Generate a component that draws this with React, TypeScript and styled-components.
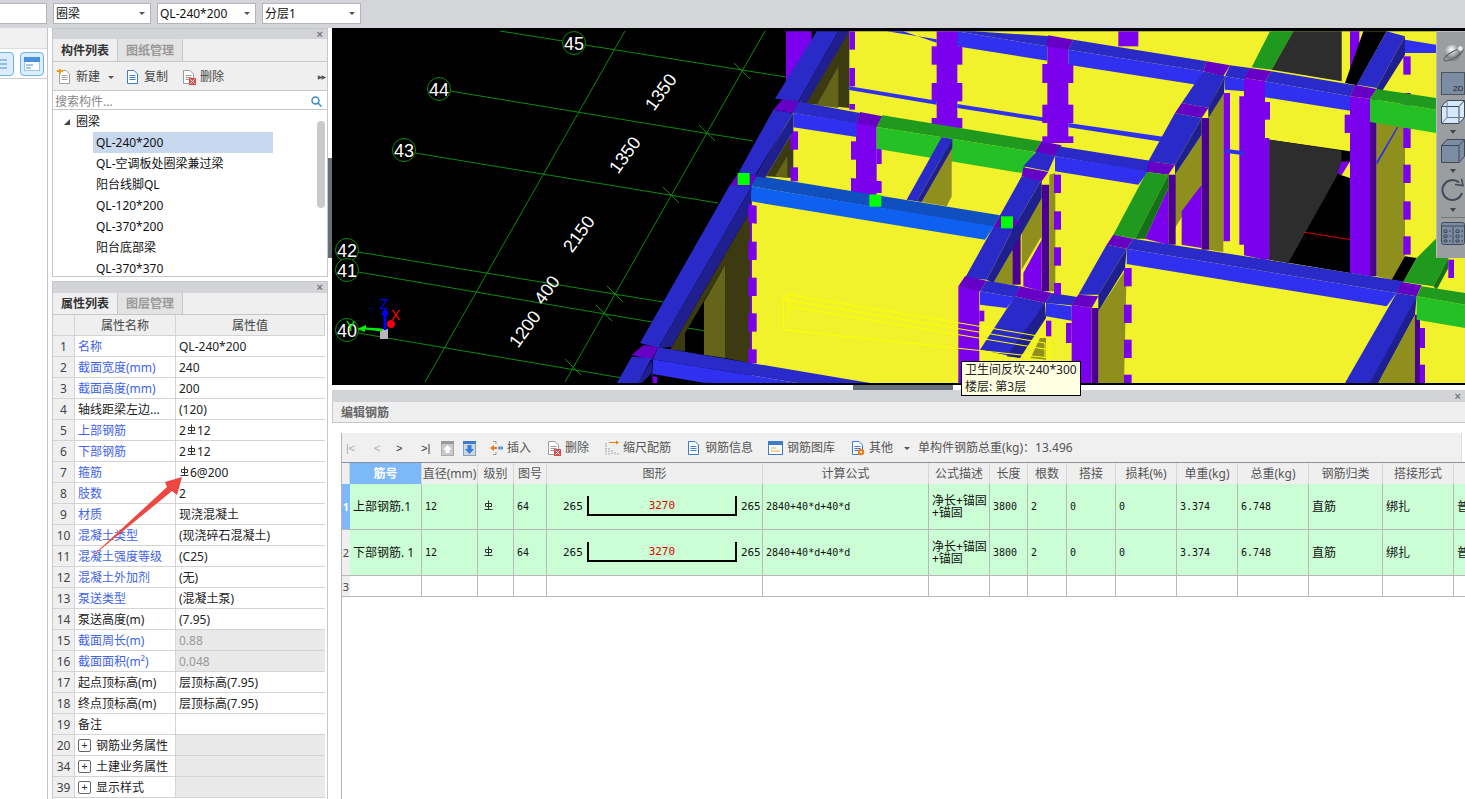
import React from 'react';
import styled, { createGlobalStyle } from 'styled-components';

const Global = createGlobalStyle`
  html, body { margin: 0; padding: 0; background: #fff; overflow: hidden; }
  body { font-family: "Noto Sans", "Noto Sans CJK SC", sans-serif; font-size: 12px; color: #111; }
  * { box-sizing: border-box; }
`;

const Page = styled.div`position: relative; width: 1465px; height: 799px; overflow: hidden; display: flex; flex-direction: column;`;
const TopBar = styled.div`height: 28px; background: #d4d5d8; display: flex; gap: 6px; padding: 3px 0 0 0; margin-left: -45px; flex: none;`;
const SelectBox = styled.div<{ $w: number }>`
  width: ${p => p.$w}px; height: 21px; background: #fff; border: 1px solid #b4b5b8; padding-left: 2px;
  display: flex; align-items: center; justify-content: space-between; padding-right: 5px; line-height: 1;
  &::after { content: ''; border: 3px solid transparent; border-top: 3px solid #555; border-bottom: 0; border-left-width: 3px; }
`;
const Body = styled.div`flex: 1; display: flex; min-height: 0;`;
const LeftStrip = styled.div`width: 48px; flex: none; border-right: 1px solid #c4c4c6; margin-right: 4px; display: flex; flex-direction: column;`;
const StripBand = styled.div`height: 21px; background: #f0f0f0; border-bottom: 1px solid #ddd;`;
const StripTools = styled.div`height: 30px; border-bottom: 1px solid #cfcfcf; display: flex; gap: 6px; padding-top: 3px; margin-left: -10px;`;
const StripButton = styled.div`width: 24px; height: 24px; border: 1px solid #6db0f4; border-radius: 4px; background: #dcedff; display: flex; align-items: center; justify-content: center;`;
const PanelColumn = styled.div`width: 276px; flex: none; display: flex; flex-direction: column; gap: 4px;`;
const Panel = styled.div<{ $grow?: boolean; $h?: number }>`
  border: 1px solid #c6c7ca; border-bottom-width: ${p => (p.$grow ? 0 : 1)}px; background: #fff; position: relative;
  ${p => (p.$h ? `height: ${p.$h}px; flex: none;` : '')} ${p => (p.$grow ? 'flex: 1; min-height: 0;' : '')}
  display: flex; flex-direction: column; overflow: hidden;
`;
const DockHead = styled.div<{ $h: number }>`
  height: ${p => p.$h}px; flex: none; background: #d3d4d8; display: flex; align-items: center; justify-content: flex-end;
  padding-right: 4px; color: #777; font-size: 11px; font-weight: 700; line-height: 1; font-family: "Liberation Sans", sans-serif;
`;
const Tabs = styled.div<{ $h: number }>`height: ${p => p.$h}px; flex: none; display: flex; background: #efefef; border-bottom: 1px solid #c6c7ca;`;
const Tab = styled.div<{ $on?: boolean }>`
  width: 65px; display: flex; align-items: center; justify-content: center; font-weight: 700; line-height: 1; padding-top: 1px;
  color: ${p => (p.$on ? '#333' : '#999')}; background: ${p => (p.$on ? '#efefef' : '#e3e3e3')};
  border-right: 1px solid #c6c7ca;
`;
const PanelTools = styled.div`height: 29px; flex: none; background: #efefef; border-bottom: 1px solid #c6c7ca; display: flex; align-items: center; padding: 2px 0 0 4px; color: #444; position: relative;`;
const ToolBtn = styled.div<{ $ml?: number }>`display: flex; align-items: center; gap: 4px; margin-left: ${p => p.$ml ?? 0}px; line-height: 1; white-space: nowrap;`;
const Caret = styled.span<{ $ml?: number }>`display: inline-block; margin-left: ${p => p.$ml ?? 0}px; border: 3px solid transparent; border-top: 3px solid #555; border-bottom: 0;`;
const More = styled.div`position: absolute; right: 2px; top: 12px; font-size: 6px; color: #555; line-height: 1; letter-spacing: -1px; font-family: "DejaVu Sans", sans-serif;`;
const Search = styled.div`height: 19px; flex: none; border-bottom: 1px solid #c6c7ca; display: flex; align-items: center; justify-content: space-between; padding: 3px 5px 0 2px; color: #888; line-height: 1;`;
const Tree = styled.div`flex: 1; position: relative; overflow: hidden; padding-top: 1px;`;
const TreeRoot = styled.div`height: 21px; display: flex; align-items: center; padding-left: 11px; gap: 6px; line-height: 1; padding-top: 1px;`;
const TreeItem = styled.div<{ $on?: boolean }>`height: 21px; margin-left: 40px; width: 180px; padding: 1px 0 0 3px; display: flex; align-items: center; line-height: 1; background: ${p => (p.$on ? '#c8d9ef' : 'transparent')};`;
const Scrollbar = styled.div`position: absolute; left: 264px; top: 11px; width: 8px; height: 87px; border-radius: 4px; background: #cacaca;`;
const PropGrid = styled.div`display: grid; grid-template-columns: 22px 101px 149px; grid-auto-rows: 21px; width: 272px; border-right: 1px solid #d0d0d0;`;
const PropHead = styled.div`background: #efefef; color: #444; display: flex; align-items: center; justify-content: center; line-height: 1; padding-top: 1px; border-right: 1px solid #d4d4d4; border-bottom: 1px solid #d4d4d4;`;
const PropNum = styled.div`background: #efefef; color: #444; font-size: 12px; display: flex; align-items: center; justify-content: center; line-height: 1; padding-top: 1px; border-right: 1px solid #d4d4d4; border-bottom: 1px solid #d4d4d4;`;
const PropName = styled.div<{ $link?: boolean }>`
  padding: 1px 0 0 3px; display: flex; align-items: center; gap: 5px; line-height: 1; white-space: nowrap; overflow: hidden;
  color: ${p => (p.$link ? '#3f63e6' : '#222')}; border-right: 1px solid #d4d4d4; border-bottom: 1px solid #d4d4d4;
`;
const PropValue = styled.div<{ $shade?: boolean; $dim?: boolean }>`
  padding: 1px 0 0 3px; display: flex; align-items: center; line-height: 1; white-space: nowrap;
  color: ${p => (p.$dim ? '#999' : '#222')}; background: ${p => (p.$shade ? '#e9e9e9' : '#fff')}; border-bottom: 1px solid #d4d4d4;
`;
const Plus = styled.span`width: 13px; height: 13px; border: 1px solid #666; border-radius: 2px; display: inline-flex; align-items: center; justify-content: center; font-size: 11px; line-height: 1; color: #333; font-family: "Liberation Sans", sans-serif;`;
const Splitter = styled.div`width: 4px; flex: none; padding-top: 130px;`;
const SplitHandle = styled.div`width: 4px; height: 100px; background: #667079;`;
const RightColumn = styled.div`flex: 1; min-width: 0; display: flex; flex-direction: column; position: relative;`;
const Viewport = styled.div`height: 357px; flex: none; background: #000; position: relative; overflow: hidden; border-bottom: 2px solid #000;`;
const Scene = styled.svg`display: block; width: 1133px; height: 357px;`;
const ViewTools = styled.div`
  position: absolute; right: 0; top: 3px; width: 29px; height: 227px; background: #9b9ea1; border-left: 1px solid #b9bbbd; border-top: 1px solid #b9bbbd;
  display: flex; flex-direction: column; align-items: center; padding-left: 3px; padding-top: 10px;
`;
const ViewCaret = styled.span`border: 3px solid transparent; border-top: 4px solid #444; border-bottom: 0; margin: 6px 0 5px;`;
const ViewRule = styled.div`width: 24px; height: 1px; background: #777; margin: 0 0 4px;`;
const HSplit = styled.div`height: 5px; flex: none; display: flex; justify-content: center; padding-left: 8px;`;
const HHandle = styled.div`width: 100px; height: 5px; background: #667079;`;
const EditPanel = styled.div`flex: 1; min-height: 0; display: flex; flex-direction: column;`;
const EditTitle = styled.div`height: 21px; flex: none; background: #efefef; border-bottom: 1px solid #c6c7ca; border-left: 1px solid #c6c7ca; color: #666; font-weight: 700; display: flex; align-items: center; padding: 1px 0 0 8px; line-height: 1;`;
const EditBody = styled.div`flex: 1; min-height: 0; padding: 10px 0 0 9px; display: flex; flex-direction: column;`;
const EditInner = styled.div`flex: 1; min-height: 0; border-left: 1px solid #b5b5b5; margin-top: 0; display: flex; flex-direction: column;`;
const EditTools = styled.div`height: 29px; flex: none; background: #f0f0f0; margin-right: 3px; border-right: 1px solid #ddd; display: flex; align-items: center; color: #555; padding-left: 4px; padding-top: 1px; line-height: 1; white-space: nowrap;`;
const Nav = styled.span<{ $w: number; $dim?: boolean }>`width: ${p => p.$w}px; flex: none; color: ${p => (p.$dim ? '#aaa' : '#333')}; font-family: "Liberation Sans", sans-serif; font-size: 11px;`;
const SteelGrid = styled.div`
  display: grid; overflow: hidden; flex: none; border-top: 1px solid #8a8f99;
  grid-template-columns: 8px 72px 56px 36px 33px 216px 166px 61px 38px 39px 49px 61px 61px 71px 74px 71px 90px;
  grid-template-rows: 21px 46px 46px 21px;
`;
const GridHead = styled.div<{ $on?: boolean }>`
  background: ${p => (p.$on ? '#7db8f8' : '#efefef')}; color: ${p => (p.$on ? '#fff' : '#555')}; font-weight: ${p => (p.$on ? 700 : 400)};
  border-right: 1px solid #d6d6d6; display: flex; align-items: center; justify-content: center; line-height: 1; white-space: nowrap;
`;
const GridNum = styled.div<{ $on?: boolean }>`
  background: ${p => (p.$on ? '#7db8f8' : '#efefef')}; color: ${p => (p.$on ? '#fff' : '#444')}; font-weight: ${p => (p.$on ? 700 : 400)}; font-size: 11px;
  border-bottom: 1px solid #b8b8b8; display: flex; align-items: center; justify-content: center; line-height: 1; overflow: hidden;
`;
const Cell = styled.div<{ $mono?: boolean; $empty?: boolean }>`
  background: ${p => (p.$empty ? '#fff' : '#cbfed5')}; border-right: 1px solid #b8b8b8; border-bottom: 1px solid #b8b8b8;
  display: flex; align-items: center; padding-left: 3px; overflow: hidden; white-space: nowrap; line-height: 1; color: #111;
  ${p => (p.$mono ? 'font-family: "DejaVu Sans Mono", monospace; font-size: 10px;' : '')}
`;
const GradeCell = styled(Cell)`padding-left: 5px;`;
const WrapText = styled.span`white-space: normal; line-height: 12px; display: block; width: 60px; word-break: break-all;`;
const ShapeCell = styled(Cell)`padding: 0 1px 0 16px; font-family: "DejaVu Sans Mono", monospace; font-size: 11px; gap: 4px;`;
const Bracket = styled.div`width: 150px; height: 20px; border: 2px solid #000; border-top: 0; margin-top: -1px; display: flex; justify-content: center; color: #e00000; padding-top: 4px;`;
const Tip = styled.div`position: absolute; left: 629px; top: 333px; width: 120px; height: 35px; background: #ffffe1; border: 1px solid #000; padding: 0 3px; line-height: 16.5px; color: #222; z-index: 3; white-space: nowrap;`;
const ArrowMark = styled.svg`position: absolute; left: 85px; top: 470px; width: 105px; height: 95px; z-index: 4;`;
const Mark = styled.svg`width: 9px; height: 11px; flex: none; margin: -3px 1px 0;`;

const RebarMark = () => (
  <Mark viewBox="0 0 9 11" fill="none" stroke="#333" strokeWidth="1">
    <path d="M1.5 6V3.5H7.5V6.5H1.5M4.5 0.5V9.5M0.5 9.5H8.5" />
  </Mark>
);

const Page16 = ({ c = '#8a9099', children }: { c?: string; children?: React.ReactNode }) => (
  <svg width="15" height="16" viewBox="0 0 15 16" fill="none">
    <path d="M2.5 1.5H9L12.5 5V14.5H2.5Z" fill="#fff" stroke={c} />
    <path d="M4.5 6.5H10.5M4.5 8.5H10.5M4.5 10.5H10.5" stroke={c} />
    {children}
  </svg>
);
const NewIcon = () => <Page16 c="#a0a0a0"><path d="M0 2H6M3 0V5" stroke="#f39a12" strokeWidth="2" /></Page16>;
const CopyIcon = () => <Page16 c="#3d7cc6" />;
const DelIcon = () => <Page16 c="#9a9a9a"><rect x="8" y="9" width="7" height="7" fill="#d94c4c" /><path d="M9.5 10.5L13.5 14.5M13.5 10.5L9.5 14.5" stroke="#fff" /></Page16>;
const GearIcon = () => <Page16 c="#3d7cc6"><circle cx="11" cy="12" r="3.2" fill="#ee7a15" /><circle cx="11" cy="12" r="1.1" fill="#fff" /></Page16>;
const InsertIcon = () => (
  <svg width="14" height="16" viewBox="0 0 14 16" fill="none">
    <path d="M4 1.5H7V4M4 14.5H7V12" stroke="#999" />
    <path d="M1 8L5 5V11Z" fill="#ee7a15" /><rect x="5" y="7" width="3" height="2" fill="#ee7a15" />
    <rect x="9" y="6.5" width="5" height="3" fill="#5aa0e8" />
  </svg>
);
const ScaleIcon = () => (
  <svg width="14" height="16" viewBox="0 0 14 16" fill="none">
    <path d="M1 3V15M4 8V15M7 10V15M10 12V15M13 13V15" stroke="#8a8f99" strokeDasharray="1.5 1" />
    <path d="M4 2.5H12" stroke="#ee7a15" /><path d="M14 2.5L11 0.5V4.5Z" fill="#ee7a15" />
  </svg>
);
const LibIcon = () => (
  <svg width="15" height="14" viewBox="0 0 15 14" fill="none">
    <rect x="0.5" y="0.5" width="14" height="13" fill="#fff" stroke="#3d7cc6" />
    <rect x="1" y="1" width="13" height="3" fill="#3d7cc6" />
    <path d="M3 7H8M3 10H12" stroke="#e0b040" />
  </svg>
);
const BoxArrow = ({ up }: { up?: boolean }) => (
  <svg width="13" height="15" viewBox="0 0 13 15">
    <rect x="0.5" y="0.5" width="12" height="14" fill={up ? '#c8c8c8' : '#cfd6e0'} stroke={up ? '#aaa' : '#8aa0c0'} />
    <rect x="0" y="0" width="13" height="3" fill={up ? '#999' : '#3d7cc6'} />
    <path d={up ? 'M6.5 4L11 8.5H8.5V12H4.5V8.5H2Z' : 'M6.5 13L11 8H8.5V4H4.5V8H2Z'} fill={up ? '#fff' : '#2f80e0'} />
  </svg>
);
const MagnifierIcon = () => (
  <svg width="11" height="11" viewBox="0 0 11 11" fill="none" stroke="#3a8cc8" strokeWidth="1.5">
    <circle cx="4.5" cy="4.5" r="3.5" /><path d="M7 7L10.5 10.5" />
  </svg>
);
const FoldMark = () => <svg width="6" height="6" viewBox="0 0 6 6"><path d="M6 0V6H0Z" fill="#444" /></svg>;

const Sphere = () => (
  <svg width="22" height="21" viewBox="0 0 24 21" style={{ marginBottom: 9 }}>
    <defs><radialGradient id="sg" cx="40%" cy="30%"><stop offset="0" stopColor="#fff" /><stop offset="1" stopColor="#80858c" /></radialGradient></defs>
    <circle cx="12" cy="11" r="9" fill="url(#sg)" />
    <ellipse cx="11.500" cy="13" rx="12" ry="3.500" transform="rotate(-30 12 11)" fill="none" stroke="#555" />
    <circle cx="20" cy="6" r="3" fill="#e8e8e8" stroke="#777" strokeWidth=".5" />
  </svg>
);
const Box2D = () => (
  <svg width="24" height="23" viewBox="0 0 24 23" style={{ marginBottom: 5 }}>
    <rect x="0.5" y="0.5" width="23" height="22" fill="#7c8ca3" stroke="#4a5560" />
    <text x="12" y="19" fontSize="8" fill="#222" fontFamily="Liberation Sans">2D</text>
  </svg>
);
const Cube = ({ wire }: { wire?: boolean }) => (
  <svg width="24" height="24" viewBox="0 0 24 24" fill="none" stroke="#3e4a58">
    <path d="M0.5 6.5L6 0.5H23.5V17.5L18 23.5H0.5Z" fill={wire ? '#d6e8fc' : '#7c8ca3'} />
    <path d="M0.5 6.5H18V23.5M18 6.5L23.5 0.5" />
    {wire && <path d="M6 0.5V17.5H23.5M6 17.5L0.5 23.5" stroke="#6a7a8c" />}
  </svg>
);
const Rotate = () => (
  <svg width="24" height="24" viewBox="0 0 24 24" fill="none" stroke="#3e4a58" strokeWidth="2">
    <path d="M21 15A10 10 0 1 1 18 4.5" /><path d="M14 6.5L22 7.5L20.5 1" strokeWidth="1.5" />
  </svg>
);
const Checklist = () => (
  <svg width="24" height="23" viewBox="0 0 24 23" fill="none" stroke="#3e4a58">
    <rect x="0.5" y="0.5" width="23" height="22" rx="2" fill="#7c8ca3" />
    <path d="M1 4H23M12 5V21M3 8H6V10.5H3ZM3 13H6V15.5H3ZM3 18H6V20H3ZM15 8H18V10.5H15ZM15 13H18V15.5H15ZM15 18H18V20H15ZM8 9H10M8 14H10M8 19H10M20 9H22M20 14H22M20 19H22" />
  </svg>
);

const Y = '#f2f22c', P = '#7a00ee', PT = '#6500c4', PD = '#4a0090', B = '#3030f0', BT = '#2a2ac8', BD = '#1f1f90';
const O = '#8f8f1e', OM = '#65651a', OD = '#3c3a10', G = '#25c025', GT = '#1f9a1f', GD = '#15701a', SB = '#0f5ff0', ST = '#0f4fc0';

type Face = [string, string];
const nearFaces: Face[] = [
  [Y, '628,10 2475,10 2475,1065 335,1065 335,470 460,250'],
  [OD, '480,225 620,10 628,10 628,240'],
  [OM, '530,232 595,115 595,240'],
  [P, '438,10 515,10 515,50 438,175'],
  [BT, '1000,10 1235,25 1222,55 950,10'],
  [B, '950,10 1222,55 1222,98 950,55'],
  [B, '740,10 890,34 890,44 790,10'],
  [P, '890,10 952,10 952,295 890,295'],
  [P, '875,55 967,55 967,110 875,110'], [P, '875,165 967,165 967,220 875,220'], [P, '875,270 967,270 967,300 875,300'],
  [B, '628,175 890,218 890,230 628,186'],
  [B, '952,228 1222,270 1222,282 952,240'],
  [P, '628,10 645,10 645,65 628,65'], [P, '628,120 645,120 645,175 628,175'], [P, '628,228 645,228 645,245 628,245'],
  [OD, '378,445 460,310 460,450'],
  [OM, '405,445 442,385 442,450'],
  [P, '452,310 474,310 474,365 452,365'], [P, '452,418 474,418 474,460 452,460'],
  [P, '648,285 710,285 710,500 648,500'],
  [P, '633,340 648,340 648,395 633,395'], [P, '710,362 725,362 725,408 710,408'], [P, '633,450 725,460 725,495 633,495'],
  [BT, '470,220 660,255 650,287 460,255'],
  [B, '460,255 650,285 650,327 460,298'],
  [PT, '660,252 727,265 710,297 650,285'],
  [GT, '727,262 1205,340 1185,372 710,297'],
  [G, '710,297 1185,372 1145,435 710,362'],
  [O, '935,360 935,505 920,535 845,522'],
  [BT, '905,328 937,333 830,520 800,515'],
  [BD, '937,333 937,360 845,522 830,520'],
  [PT, '1185,372 1205,340 1265,352 1245,385'],
  [BT, '1150,415 1190,370 1245,385 1225,430'],
  [PD, '1205,470 1228,470 1228,790 1205,790'],
  [O, '1228,440 1246,435 1246,790 1228,790'],
  [O, '1145,580 1205,510 1205,625 1145,725'],
  [P, '1150,735 1205,635 1205,790 1150,775'],
  [PD, '1115,580 1142,580 1142,770 1115,770'],
  [O, '1060,765 1118,665 1118,770'],
  [ST, '345,442 1080,562 1060,597 332,475'],
  [SB, '332,475 1062,595 1035,635 332,520'],
  [OD, '90,965 330,550 330,1005 255,990 255,711 135,916 135,970'],
  [OM, '192,821 255,711 255,990 192,980'],
  [BT, '0,945 270,470 335,475 55,960'],
  [BD, '55,960 335,475 330,550 95,956'],
  [PT, '270,472 295,435 352,442 332,475'],
  [BT, '295,435 400,245 460,255 345,442'],
  [BD, '345,445 460,255 460,310 375,450'],
  [PT, '400,245 430,210 475,220 460,255'],
  [BT, '405,212 530,10 595,10 475,220'],
  [BD, '475,220 595,10 628,10 500,225'],
  [P, '330,525 335,525 335,1010 330,1010'],
  [P, '325,530 350,533 350,587 325,584'], [P, '325,641 350,641 350,696 325,696'], [P, '325,749 350,749 350,804 325,804'], [P, '325,856 350,856 350,911 325,911'], [P, '325,964 350,964 350,1006 325,1006'],
  [PT, '-25,981 10,951 55,958 35,996'],
  [BT, '-25,986 35,991 -5,1066 -70,1066'],
  [BD, '35,996 35,1036 5,1065 -5,1065'],
  [BT, '55,958 690,1065 510,1071 38,994'],
  [B, '38,994 510,1071 190,1064 38,1038'],
  [BT, '35,994 38,1040 35,1065 35,1040'],
  [P, '38,1045 52,1047 52,1065 38,1065'],
  [BT, '1060,597 1080,562 1145,445 1205,455 1120,600 1040,755 975,750'],
  [BD, '1205,455 1205,510 1118,665 1060,765 1040,755 1120,600'],
  [PT, '1145,445 1150,418 1225,432 1205,460'],
  [PT, '1062,597 1080,565 1140,580 1120,600'],
  [P, '955,775 1018,785 1018,1065 955,1065'],
  [P, '1018,848 1033,848 1033,880 1018,880'],
  [PT, '975,745 1040,758 1020,790 955,775'],
  [BT, '1040,758 1140,775 1125,808 1020,790'],
  [B, '1020,790 1125,808 1100,840 1020,830'],
  [BT, '1125,805 1215,825 1140,990 1020,965'],
  [BD, '1215,825 1218,870 1140,990 1100,985'],
  [PT, '1140,775 1235,795 1215,825 1125,805'],
  [BT, '1235,795 1312,807 1295,832 1215,825'],
  [B, '1218,825 1295,835 1295,878 1218,865'],
  [P, '1218,878 1234,878 1234,925 1218,925'],
  [O, '1200,930 1218,930 1218,995 1172,990'],
];
const farFaces: Face[] = [
  [P, '355,10 415,10 415,55 355,55'],
  [GT, '810,10 880,10 815,125 755,118'],
  ['#2d2d2d', '880,10 1025,10 1025,160 815,125'],
  [P, '1050,10 1078,10 1078,100 1050,130'],
  ['#000', '1090,10 1160,10 1070,172 1035,165'],
  [P, '142,50 205,50 205,340 142,340'],
  [P, '127,108 220,108 220,165 127,165'], [P, '127,230 220,230 220,285 127,285'], [P, '127,325 220,325 220,345 127,345'],
  [PT, '145,22 220,35 205,65 140,55'],
  [BT, '220,35 620,100 610,130 205,65'],
  [B, '205,65 610,130 590,170 205,110'],
  [B, '205,285 500,328 490,342 205,298'],
  [PT, '620,100 690,112 670,145 610,130'],
  [BT, '690,112 750,120 735,155 675,145'],
  [B, '675,145 735,155 735,190 675,185'],
  ['#000', '808,335 1050,370 1050,735 808,695'],
  ['#2d2d2d', '808,335 1025,368 1025,400 1010,445 865,705 808,695'],
  ['#e00000', '912,611 1050,633 1050,636 912,614'],
  [Y, '1020,440 1050,400 1050,450'],
  [P, '1012,435 1025,400 1050,400 1025,442'],
  ['#000', '1025,370 1048,370 1048,400 1025,400'],
  [P, '670,195 690,195 690,640 670,640'],
  [P, '718,205 732,205 732,650 718,650'],
  [B, '675,362 732,370 732,382 675,374'],
  [P, '732,150 795,160 795,695 732,682'],
  [P, '795,222 810,222 810,275 795,275'], [P, '795,330 808,330 808,695 795,695'],
  [BT, '815,130 1065,172 1050,205 795,160'],
  [PT, '750,120 815,130 795,160 732,150'],
  [B, '795,160 1050,205 1050,248 795,208'],
  [P, '1050,205 1110,212 1110,745 1050,735'],
  [P, '1034,260 1050,260 1050,315 1034,315'],
  [PD, '1110,212 1130,212 1130,745 1110,745'],
  [O, '1130,285 1215,285 1215,690 1175,755 1130,745'],
  [B, '1130,400 1190,298 1195,298 1130,412'],
  [P, '1210,85 1232,85 1232,140 1210,140'], [P, '1210,195 1232,195 1232,250 1210,250'], [P, '1210,300 1232,300 1232,360 1210,360'], [P, '1210,410 1232,410 1232,465 1210,465'], [P, '1210,520 1232,520 1232,575 1210,575'], [P, '1210,625 1232,625 1232,680 1210,680'],
  [BT, '1160,10 1215,25 1130,180 1070,170'],
  [BD, '1215,25 1215,80 1130,215 1130,180'],
  [B, '1215,35 1308,50 1308,75 1215,75'],
  [PT, '1065,170 1130,183 1110,212 1050,205'],
  [GT, '1130,183 1308,210 1308,245 1110,212'],
  [G, '1110,212 1308,245 1308,315 1110,282'],
  [O, '525,440 605,320 605,470 525,600'],
  [P, '435,632 505,480 505,650'],
  [PD, '505,440 527,440 527,650 505,650'],
  [P, '545,550 605,470 605,660 545,650'],
  [PD, '605,270 627,270 627,665 605,665'],
  [O, '627,200 670,200 670,672 627,665'],
  [BT, '610,130 675,145 625,240 545,225'],
  [BD, '675,145 672,195 625,270 625,240'],
  [PT, '545,225 625,240 605,270 525,255'],
  [BT, '525,255 605,270 525,410 445,400'],
  [BD, '605,270 605,320 525,440 525,410'],
  [BT, '175,355 460,400 440,432 165,385'],
  [B, '165,385 445,430 415,470 165,430'],
  [P, '162,440 183,440 183,495 162,495'], [P, '162,550 183,550 183,605 162,605'], [P, '162,658 183,658 183,713 162,713'], [P, '162,765 183,765 183,800 162,800'],
  [PT, '445,400 525,410 505,440 440,432'],
  [GT, '440,432 505,440 405,632 340,620'],
  [GD, '505,440 505,480 435,632 405,632'],
  [O, '380,720 295,850 295,1065 372,1065'],
  [BT, '320,650 380,662 295,800 235,800'],
  [BD, '380,662 375,720 295,850 295,800'],
  [P, '215,830 275,840 275,1065 215,1065'],
  [P, '198,885 215,885 215,945 198,945'],
  [PD, '275,840 295,840 295,1065 275,1065'],
  [PT, '235,800 295,805 275,840 215,830'],
  [PT, '340,620 400,632 380,662 320,650'],
  ['#000', '1175,755 1215,685 1250,690 1210,762'],
  [GT, '1250,690 1310,630 1345,690 1300,775 1210,762'],
  [GD, '1345,690 1345,720 1310,785 1300,775'],
  [BT, '400,632 1210,760 1190,795 380,662'],
  [B, '380,662 1190,795 1160,835 380,708'],
  [PT, '1205,762 1265,772 1250,805 1190,795'],
  [BT, '1190,795 1250,805 1130,1065 1035,1065'],
  [BD, '1250,805 1245,860 1135,1065 1110,1065'],
  [O, '1245,860 1245,1065 1135,1065'],
  [P, '372,720 395,720 395,775 372,775'], [P, '372,830 395,830 395,885 372,885'], [P, '372,935 395,935 395,990 372,990'], [P, '372,1040 395,1040 395,1065 372,1065'],
  [PD, '1245,860 1260,860 1260,1065 1245,1065'],
  [P, '1260,900 1275,900 1275,960 1260,960'], [P, '1260,1010 1275,1010 1275,1065 1260,1065'],
  [GT, '1265,775 1395,795 1395,830 1250,805'],
  [G, '1250,805 1395,830 1395,900 1250,875'],
  [P, '1345,695 1362,695 1362,750 1345,750'],
];
const axisRows = [
  { n: '45', cx: 574, cy: 43, l: [585, 45, 786, 77] },
  { n: '44', cx: 439, cy: 89, l: [450, 91, 753, 141] },
  { n: '43', cx: 404, cy: 150, l: [415, 153, 718, 203] },
  { n: '42', cx: 347, cy: 250, l: [358, 252, 663, 302] },
  { n: '41', cx: 347, cy: 270, l: [358, 272, 705, 331] },
  { n: '40', cx: 347, cy: 330, l: [358, 333, 640, 381] },
];
const ticks = [[742, 71], [707, 133], [671, 195], [615, 294], [604, 313], [573, 367]];
const dims = [['1350', 661, 92], ['1350', 625, 155], ['2150', 579, 234], ['400', 547, 290], ['1200', 525, 329]];

const Polys = ({ list }: { list: Face[] }) => (
  <>{list.map(([f, p], i) => <polygon key={i} fill={f} points={p} />)}</>
);

const BuildingScene = () => (
  <Scene viewBox="332 28 1133 357">
    <g stroke="#0c8a0c" strokeWidth="1">
      <line x1="500" y1="31" x2="563" y2="41" />
      {axisRows.map(a => <line key={a.n} x1={a.l[0]} y1={a.l[1]} x2={a.l[2]} y2={a.l[3]} />)}
      <line x1="625" y1="31" x2="425" y2="382" />
      <line x1="765" y1="31" x2="565" y2="382" />
      {ticks.map(([x, y]) => <line key={x} x1={x - 8} y1={y - 8} x2={x + 8} y2={y + 8} />)}
    </g>
    {axisRows.map(a => (
      <g key={a.n}>
        <circle cx={a.cx} cy={a.cy} r="11.5" fill="#000" stroke="#0c8a0c" />
        <text x={a.cx} y={a.cy + 6.5} textAnchor="middle" fontSize="18" fill="#fff" fontFamily="Liberation Sans">{a.n}</text>
      </g>
    ))}
    {dims.map(([t, x, y]) => (
      <text key={`${t}${x}`} transform={`translate(${x} ${y}) rotate(-54)`} textAnchor="middle" y="6" fontSize="18" fill="#fff" fontFamily="Liberation Sans">{t}</text>
    ))}
    <g transform="translate(640 28) scale(.33333)">
      <Polys list={nearFaces} />
      <g transform="translate(1080 0)"><Polys list={farFaces} /></g>
      <rect x="293" y="435" width="36" height="36" fill="#00ff00" />
      <rect x="688" y="500" width="36" height="36" fill="#00ff00" />
      <rect x="1083" y="565" width="36" height="36" fill="#00ff00" />
      <path d="M445 800L1230 930V990L430 905V815ZM430 815L1215 945M445 800V885M445 835L1225 965M1020 900V955M1215 945V990" fill="none" stroke="#ffff00" strokeWidth="3" />
    </g>
    <rect x="380" y="329" width="8" height="10" fill="#b8b8b8" />
    <circle cx="391" cy="324" r="4" fill="#ee0010" />
    <path d="M383.5 330V315H381L385 308L389 315H386.5V330Z" fill="#0000ff" />
    <path d="M382 331.500L365 329.500V332L357 329L366 325V327.500L382 328.500Z" fill="#00ee00" />
    <text x="380" y="309" fontSize="14" fill="#0000ff" fontFamily="Liberation Sans">Z</text>
    <text x="391" y="320" fontSize="14" fill="#ff0000" fontFamily="Liberation Sans">X</text>
    <text x="346" y="331" fontSize="14" fill="#00ee00" fontFamily="Liberation Sans">Y</text>
  </Scene>
);

const props: { n: string; name?: string; link?: boolean; value?: React.ReactNode; shade?: boolean; dim?: boolean; plus?: boolean }[] = [
  { n: '1', name: '名称', link: true, value: 'QL-240*200' },
  { n: '2', name: '截面宽度(mm)', link: true, value: '240' },
  { n: '3', name: '截面高度(mm)', link: true, value: '200' },
  { n: '4', name: '轴线距梁左边...', value: '(120)' },
  { n: '5', name: '上部钢筋', link: true, value: <>2<RebarMark />12</> },
  { n: '6', name: '下部钢筋', link: true, value: <>2<RebarMark />12</> },
  { n: '7', name: '箍筋', link: true, value: <><RebarMark />6@200</> },
  { n: '8', name: '肢数', link: true, value: '2' },
  { n: '9', name: '材质', link: true, value: '现浇混凝土' },
  { n: '10', name: '混凝土类型', link: true, value: '(现浇碎石混凝土)' },
  { n: '11', name: '混凝土强度等级', link: true, value: '(C25)' },
  { n: '12', name: '混凝土外加剂', link: true, value: '(无)' },
  { n: '13', name: '泵送类型', link: true, value: '(混凝土泵)' },
  { n: '14', name: '泵送高度(m)', value: '(7.95)' },
  { n: '15', name: '截面周长(m)', link: true, value: '0.88', shade: true, dim: true },
  { n: '16', name: '截面面积(m²)', link: true, value: '0.048', shade: true, dim: true },
  { n: '17', name: '起点顶标高(m)', value: '层顶标高(7.95)' },
  { n: '18', name: '终点顶标高(m)', value: '层顶标高(7.95)' },
  { n: '19', name: '备注', value: '' },
  { n: '20', name: '钢筋业务属性', plus: true, shade: true },
  { n: '34', name: '土建业务属性', plus: true, shade: true },
  { n: '39', name: '显示样式', plus: true, shade: true },
];
const treeItems = ['QL-240*200', 'QL-空调板处圈梁兼过梁', '阳台线脚QL', 'QL-120*200', 'QL-370*200', '阳台底部梁', 'QL-370*370'];
const heads = ['筋号', '直径(mm)', '级别', '图号', '图形', '计算公式', '公式描述', '长度', '根数', '搭接', '损耗(%)', '单重(kg)', '总重(kg)', '钢筋归类', '搭接形式', ''];
const steelRows = [
  { n: '1', name: '上部钢筋.1', on: true },
  { n: '2', name: '下部钢筋. 1', on: false },
];

const App = () => (
  <Page>
    <Global />
    <TopBar>
      <SelectBox $w={92} />
      <SelectBox $w={98}>圈梁</SelectBox>
      <SelectBox $w={99}>QL-240*200</SelectBox>
      <SelectBox $w={99}>分层1</SelectBox>
    </TopBar>
    <Body>
      <LeftStrip>
        <StripBand />
        <StripTools>
          <StripButton>
            <svg width="12" height="12" viewBox="0 0 12 12" stroke="#4a90e0"><path d="M1 2H11M1 6H11M1 10H11" /></svg>
          </StripButton>
          <StripButton>
            <svg width="16" height="14" viewBox="0 0 16 14"><rect width="16" height="14" fill="#fff" stroke="#4a90e0" /><rect width="16" height="5" fill="#4a90e0" /><path d="M2 8H9M2 11H7" stroke="#4a90e0" /></svg>
          </StripButton>
        </StripTools>
      </LeftStrip>
      <PanelColumn>
        <Panel $h={249}>
          <DockHead $h={10}>×</DockHead>
          <Tabs $h={23}><Tab $on>构件列表</Tab><Tab>图纸管理</Tab></Tabs>
          <PanelTools>
            <ToolBtn><NewIcon />新建<Caret $ml={4} /></ToolBtn>
            <ToolBtn $ml={11}><CopyIcon />复制</ToolBtn>
            <ToolBtn $ml={13}><DelIcon />删除</ToolBtn>
            <More>▶▶</More>
          </PanelTools>
          <Search>搜索构件...<MagnifierIcon /></Search>
          <Tree>
            <TreeRoot><FoldMark />圈梁</TreeRoot>
            {treeItems.map((t, i) => <TreeItem key={t} $on={i === 0}>{t}</TreeItem>)}
            <Scrollbar />
          </Tree>
        </Panel>
        <Panel $grow>
          <DockHead $h={11}>×</DockHead>
          <Tabs $h={22}><Tab $on>属性列表</Tab><Tab>图层管理</Tab></Tabs>
          <PropGrid>
            <PropHead /><PropHead>属性名称</PropHead><PropHead>属性值</PropHead>
            {props.map(p => (
              <React.Fragment key={p.n}>
                <PropNum>{p.n}</PropNum>
                <PropName $link={p.link}>{p.plus && <Plus>+</Plus>}{p.name}</PropName>
                <PropValue $shade={p.shade} $dim={p.dim}>{p.value}</PropValue>
              </React.Fragment>
            ))}
          </PropGrid>
        </Panel>
      </PanelColumn>
      <Splitter><SplitHandle /></Splitter>
      <RightColumn>
        <Viewport>
          <BuildingScene />
          <ViewTools>
            <Sphere />
            <Box2D />
            <Cube wire />
            <ViewCaret />
            <Cube />
            <ViewCaret />
            <Rotate />
            <ViewCaret />
            <ViewRule />
            <Checklist />
          </ViewTools>
        </Viewport>
        <HSplit><HHandle /></HSplit>
        <EditPanel>
          <DockHead $h={12}>×</DockHead>
          <EditTitle>编辑钢筋</EditTitle>
          <EditBody>
            <EditInner>
              <EditTools>
                <Nav $w={28} $dim>|&lt;</Nav>
                <Nav $w={22} $dim>&lt;</Nav>
                <Nav $w={25}>&gt;</Nav>
                <Nav $w={20}>&gt;|</Nav>
                <ToolBtn><BoxArrow up /></ToolBtn>
                <ToolBtn $ml={9}><BoxArrow /></ToolBtn>
                <ToolBtn $ml={13}><InsertIcon />插入</ToolBtn>
                <ToolBtn $ml={15}><DelIcon />删除</ToolBtn>
                <ToolBtn $ml={16}><ScaleIcon />缩尺配筋</ToolBtn>
                <ToolBtn $ml={15}><CopyIcon />钢筋信息</ToolBtn>
                <ToolBtn $ml={15}><LibIcon />钢筋图库</ToolBtn>
                <ToolBtn $ml={15}><GearIcon />其他<Caret $ml={7} /></ToolBtn>
                <ToolBtn $ml={8}>单构件钢筋总重(kg)：13.496</ToolBtn>
              </EditTools>
              <SteelGrid>
                <GridHead />
                {heads.map((h, i) => <GridHead key={i} $on={i === 0}>{h}</GridHead>)}
                {steelRows.map(r => (
                  <React.Fragment key={r.n}>
                    <GridNum $on={r.on}>{r.n}</GridNum>
                    <Cell>{r.name}</Cell>
                    <Cell $mono>12</Cell>
                    <GradeCell><RebarMark /></GradeCell>
                    <Cell $mono>64</Cell>
                    <ShapeCell>265<Bracket>3270</Bracket>265</ShapeCell>
                    <Cell $mono>2840+40*d+40*d</Cell>
                    <Cell><WrapText>净长+锚固+锚固</WrapText></Cell>
                    <Cell $mono>3800</Cell>
                    <Cell $mono>2</Cell>
                    <Cell $mono>0</Cell>
                    <Cell $mono>0</Cell>
                    <Cell $mono>3.374</Cell>
                    <Cell $mono>6.748</Cell>
                    <Cell>直筋</Cell>
                    <Cell>绑扎</Cell>
                    <Cell>普通钢筋</Cell>
                  </React.Fragment>
                ))}
                <GridNum>3</GridNum>
                {heads.map((_, i) => <Cell key={i} $empty />)}
              </SteelGrid>
            </EditInner>
          </EditBody>
        </EditPanel>
        <Tip>卫生间反坎-240*300<br />楼层: 第3层</Tip>
      </RightColumn>
    </Body>
    <ArrowMark viewBox="85 470 105 95">
      <path d="M90 558L167 487L165 482L182 477L177 495L172 491Z" fill="#ee4640" />
    </ArrowMark>
  </Page>
);

export default App;
